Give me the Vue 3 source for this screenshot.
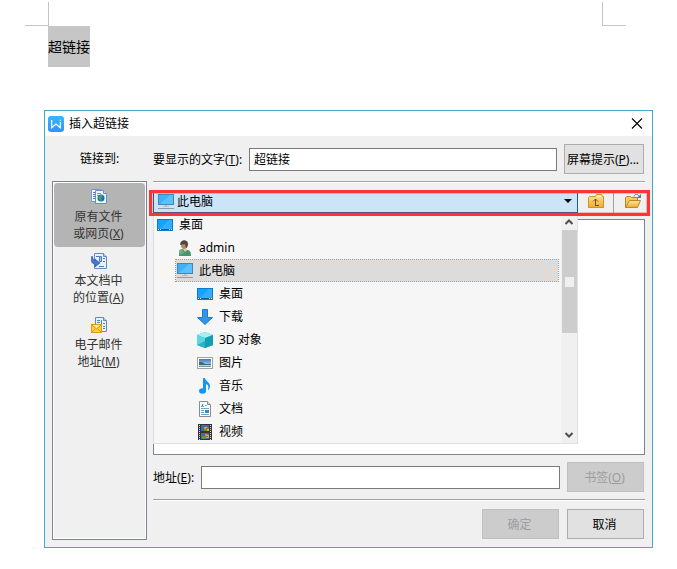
<template>
  <main class="page">
    <!-- shared icon shapes -->
    <svg class="sprite" width="0" height="0" aria-hidden="true">
      <defs>
        <linearGradient id="logo-blue" x1="0" y1="0" x2="0" y2="1">
          <stop offset="0" stop-color="#35b8fb" />
          <stop offset="1" stop-color="#3292f8" />
        </linearGradient>
        <linearGradient id="folder-gold" x1="0" y1="0" x2="0" y2="1">
          <stop offset="0" stop-color="#ffe79a" />
          <stop offset="1" stop-color="#efaa2c" />
        </linearGradient>
        <linearGradient id="sky" x1="0" y1="0" x2="0" y2="1">
          <stop offset="0" stop-color="#3b78c4" />
          <stop offset="1" stop-color="#d8ecf6" />
        </linearGradient>
      </defs>
      <symbol id="computer" viewBox="0 0 16 16">
        <rect x="0.5" y="0.5" width="15" height="10" fill="#3eb1f7" stroke="#3f87b5" />
        <path d="M2 10L12 1h3v9z" fill="#5cc1fb" />
        <path d="M7 11h2v1h2v1H5v-1h2z" fill="#b5bcc4" />
        <path d="M0 14.500h16" stroke="#8c9cae" />
      </symbol>
      <symbol id="desktop" viewBox="0 0 16 16">
        <rect x="0.5" y="2.5" width="15" height="11" fill="#16a1fb" stroke="#087cc8" />
        <path d="M3 12L12 3h3v9z" fill="#35adfc" />
        <path d="M1 12.500h14" stroke="#0b5f9d" />
        <path d="M1 12.500h1M3 12.500h1M12 12.500h1M14 12.500h1" stroke="#d6efff" />
      </symbol>
      <symbol id="user" viewBox="0 0 16 16">
        <path d="M2 16c0-5 1-6 4-7l4 1c3 0 4 2 4 6z" fill="#46956f" />
        <path d="M2 10l3-1 2 4-4 2z" fill="#6aae8c" />
        <path d="M6 8h3l1 2-2 2-2-3z" fill="#eac9a4" />
        <ellipse cx="7" cy="5" rx="3" ry="4" fill="#b98a68" />
        <path d="M3 5c0-6 8-6 8-1 0 2-1 4-2 4L8 4z" fill="#504740" />
      </symbol>
      <symbol id="download" viewBox="0 0 16 16">
        <path d="M5.500 0.500h5v8h5L8 15.500 0.500 8.500h5z" fill="#3295e7" stroke="#2278c2" />
      </symbol>
      <symbol id="cube" viewBox="0 0 16 16">
        <path d="M0 3l8-3 8 3v10l-8 3-8-3z" fill="#27bccd" />
        <path d="M0 3l8-3 8 3-8 3z" fill="#a5eff2" />
        <path d="M0 3l8 3v10l-8-3z" fill="#5cd6df" />
        <path d="M8 6l8-3v10l-8 3z" fill="#159db2" />
        <path d="M0 13l8-4v7z" fill="#26b3c5" />
      </symbol>
      <symbol id="picture" viewBox="0 0 16 16">
        <rect x="0.500" y="2.500" width="15" height="11" fill="#fff" stroke="#a2a2a2" />
        <rect x="2" y="4" width="12" height="8" fill="url(#sky)" />
        <path d="M2 7l3 0 3 2h6v1H2z" fill="#3c6d62" />
        <path d="M2 11h12v1H2z" fill="#6b99b7" />
      </symbol>
      <symbol id="music" viewBox="0 0 16 16">
        <ellipse cx="5.500" cy="13" rx="3.500" ry="2.800" fill="#1296f0" />
        <path d="M6 0h2c0 3 5 4 5 8 0 2-1 4-2 4 1-4 0-5-2-6v7H6z" fill="#1296f0" />
      </symbol>
      <symbol id="document" viewBox="0 0 16 16">
        <path d="M2.500 0.500h8l3 3v12h-11z" fill="#fff" stroke="#8b8b8b" />
        <path d="M10.500 0.500v3h3" fill="#ddd" stroke="#8b8b8b" />
        <path d="M4 5.500h3M8 4.500h2M4 7.500h8M4 9.500h3M4 11.500h3M4 13.500h8" stroke="#6ea5c5" />
        <path d="M6 3l-1 2" stroke="#1475a8" />
        <path d="M8 9h4v3H8z" fill="#448ab0" />
      </symbol>
      <symbol id="video" viewBox="0 0 16 16">
        <path d="M1 0h14v16H1z" fill="#343434" />
        <path d="M2.500 1v15M13.500 1v15" stroke="#e2e2e2" stroke-dasharray="1 1" />
        <path d="M4 1h8v6H4zM4 9h8v6H4z" fill="#3d69b5" />
        <path d="M7 3h3l2 2v2H8zM8 10l4 1v3H9z" fill="#e8b51e" />
        <path d="M7 5h3v2H7zM5 12h4v3H5z" fill="#63934b" />
        <path d="M9 4h2v1H9zM9 12h2v1H9z" fill="#d93b27" />
      </symbol>
      <symbol id="web-file" viewBox="0 0 16 16">
        <path d="M0.500 0.500h9v12h-9z" fill="#f7fbff" stroke="#7799c8" />
        <path d="M2 3.500h2M2 5.500h2M2 7.500h2M2 9.500h2" stroke="#4f78b8" />
        <path d="M4.500 1.500h8l3 3v10h-11z" fill="#eef5ff" stroke="#6d8ec0" />
        <path d="M12.500 1.500v3h3" fill="#bad1ef" stroke="#6d8ec0" />
        <path d="M6 4.500h4M6 6.500h2" stroke="#749bc8" />
        <circle cx="10" cy="9" r="3.500" fill="#2469b7" />
        <path d="M7 8l3-2 2 1-2 2 1 3-2-1z" fill="#42ad45" />
      </symbol>
      <symbol id="place-file" viewBox="0 0 16 16">
        <path d="M3.500 0.500h9l3 3v12h-12z" fill="#e8f1ff" stroke="#6788bd" />
        <path d="M12.500 0.500v3h3" fill="#bad0ee" stroke="#6788bd" />
        <path d="M5 3.500h3M12 5.500h2M12 8.500h2M8 13.500h5" stroke="#4b79ba" />
        <path d="M8.500 3.500h2v5h-2z" fill="#a8c7eb" stroke="#4b79ba" />
        <path d="M1 3C-1 8 1 11 4 11v3l5-4-5-4v2C3 8 2 6 1 3z" fill="#4777d1" stroke="#2449a1" stroke-width="0.600" />
      </symbol>
      <symbol id="mail-file" viewBox="0 0 16 16">
        <path d="M4.500 0.500h8l3 3v11h-11z" fill="#e8f1ff" stroke="#6788bd" />
        <path d="M12.500 0.500v3h3" fill="#bad0ee" stroke="#6788bd" />
        <path d="M6 3.500h3M6 5.500h3M12 6.500h2M12 9.500h2M12 11.500h2" stroke="#5583be" />
        <path d="M10 3h1v4h-1z" fill="#5583be" />
        <rect x="0.500" y="7.500" width="10" height="8" fill="#ffd03c" stroke="#e09a1a" />
        <path d="M1 8l4.500 4L10 8" fill="#ffec9c" stroke="#cf8a16" />
        <path d="M1 15l3-3M10 15l-3-3" stroke="#e09a1a" />
      </symbol>
      <symbol id="folder-up" viewBox="0 0 16 16">
        <path d="M0.500 3.500l1-1h6l1-2h5l1 2h1v11h-15z" fill="url(#folder-gold)" stroke="#d0922a" />
        <path d="M9 2.500h5" stroke="#fff0b5" />
        <path d="M7.500 11.500V5M5 7.500L7.500 5 10 7.500M7 11.500h4" fill="none" stroke="#70501c" />
      </symbol>
      <symbol id="folder-open" viewBox="0 0 16 16">
        <path d="M0.500 13.500v-10l1-1h4l1 1h6v3" fill="#f6c85d" stroke="#b38630" />
        <path d="M0.500 13.500l4-7h11l-3 7z" fill="url(#folder-gold)" stroke="#b98a2c" />
        <path d="M9 2.500c1-3 4-3 5 0" fill="none" stroke="#55749b" />
        <path d="M16 0v4h-4z" fill="#55749b" />
      </symbol>
    </svg>

    <section class="document">
      <div class="margins">
        <span class="mark mark--left"></span>
        <span class="mark mark--right"></span>
      </div>
      <p class="selection">超链接</p>
    </section>

    <form class="dialog" @submit.prevent>
      <header class="titlebar">
        <svg class="icon" viewBox="0 0 16 16" aria-hidden="true">
          <rect width="16" height="16" rx="3" fill="url(#logo-blue)" />
          <path
            d="M3 4.500h0.700v7.200L8 8l4.300 3.700V6M12.300 3.800v1"
            fill="none"
            stroke="#fff"
            stroke-width="1.200"
          />
        </svg>
        <h1>插入超链接</h1>
        <button class="close" type="button" aria-label="关闭">
          <svg viewBox="0 0 12 12" aria-hidden="true">
            <path d="M1 0.500l10 10M11 0.500L1 10.500" stroke="#000" stroke-width="1.100" />
          </svg>
        </button>
      </header>

      <div class="body">
        <aside class="side">
          <h2>链接到:</h2>
          <div class="targets">
            <button
              v-for="t in targets"
              :key="t.key"
              type="button"
              class="target"
              :class="{ active: target === t.key }"
              @click="target = t.key"
            >
              <svg class="icon" aria-hidden="true"><use :href="`#${t.icon}`" /></svg>
              <span>{{ t.first }}<br />{{ t.second }}(<u>{{ t.key }}</u>)</span>
            </button>
          </div>
        </aside>

        <section class="content">
          <div class="field">
            <label class="caption caption--wide" for="display-text">要显示的文字(<u>T</u>):</label>
            <input id="display-text" v-model="displayText" type="text" />
            <button class="btn btn--wide" type="button">屏幕提示(<u>P</u>)...</button>
          </div>

          <hr />

          <div class="browser">
            <div class="location">
              <div class="combo">
                <select v-model="folder" aria-label="查找范围">
                  <option v-for="f in folders" :key="f.id" :value="f.id">{{ f.label }}</option>
                </select>
                <svg class="icon combo-icon" aria-hidden="true"><use :href="`#${currentIcon}`" /></svg>
                <svg class="combo-arrow" viewBox="0 0 8 4" aria-hidden="true">
                  <path d="M0 0h8L4 4z" />
                </svg>

                <div class="dropdown">
                  <ul role="listbox" aria-label="查找范围">
                    <li
                      v-for="f in folders"
                      :key="f.id"
                      role="option"
                      :aria-selected="folder === f.id"
                      class="option"
                      :class="[`level-${f.level}`, { selected: folder === f.id }]"
                      @click="folder = f.id"
                    >
                      <svg class="icon" aria-hidden="true"><use :href="`#${f.icon}`" /></svg>
                      {{ f.label }}
                    </li>
                  </ul>
                  <div class="scrollbar">
                    <svg viewBox="0 0 8 6" aria-hidden="true">
                      <path d="M0.500 5L4 1.500 7.500 5" />
                    </svg>
                    <span class="thumb"><i></i></span>
                    <svg viewBox="0 0 8 6" aria-hidden="true">
                      <path d="M0.500 1L4 4.500 7.500 1" />
                    </svg>
                  </div>
                </div>
              </div>
              <button class="tool" type="button" aria-label="上一级">
                <svg class="icon" aria-hidden="true"><use href="#folder-up" /></svg>
              </button>
              <button class="tool" type="button" aria-label="浏览文件">
                <svg class="icon" aria-hidden="true"><use href="#folder-open" /></svg>
              </button>
              <span class="highlight"></span>
            </div>
            <div class="files"></div>
          </div>

          <div class="field">
            <label class="caption" for="address">地址(<u>E</u>):</label>
            <input id="address" v-model="address" type="text" />
            <button class="btn" type="button" disabled>书签(<u>O</u>)</button>
          </div>

          <hr />

          <footer class="actions">
            <button class="btn" type="submit" :disabled="!address">确定</button>
            <button class="btn" type="button">取消</button>
          </footer>
        </section>
      </div>
    </form>
  </main>
</template>

<script setup>
import { ref, computed } from "vue";

const targets = [
  { key: "X", icon: "web-file", first: "原有文件", second: "或网页" },
  { key: "A", icon: "place-file", first: "本文档中", second: "的位置" },
  { key: "M", icon: "mail-file", first: "电子邮件", second: "地址" },
];

const folders = [
  { id: "root", label: "桌面", icon: "desktop", level: 0 },
  { id: "admin", label: "admin", icon: "user", level: 1 },
  { id: "pc", label: "此电脑", icon: "computer", level: 1 },
  { id: "desktop", label: "桌面", icon: "desktop", level: 2 },
  { id: "downloads", label: "下载", icon: "download", level: 2 },
  { id: "objects", label: "3D 对象", icon: "cube", level: 2 },
  { id: "pictures", label: "图片", icon: "picture", level: 2 },
  { id: "music", label: "音乐", icon: "music", level: 2 },
  { id: "documents", label: "文档", icon: "document", level: 2 },
  { id: "videos", label: "视频", icon: "video", level: 2 },
];

const target = ref("X");
const folder = ref("pc");
const displayText = ref("超链接");
const address = ref("");

const currentIcon = computed(
  () => folders.find((f) => f.id === folder.value).icon,
);
</script>

<style>
body {
  background: #fff;
}
</style>

<style scoped>
.page {
  font-family: "Noto Sans", "Noto Sans CJK SC", sans-serif;
  font-size: 12px;
  line-height: 17px;
  color: #000;
  padding-bottom: 21px;
}

.page * {
  box-sizing: border-box;
}

.sprite {
  position: absolute;
}

.icon {
  display: block;
  flex: none;
  width: 16px;
  height: 16px;
}

button,
input,
select {
  font: inherit;
  color: inherit;
  margin: 0;
}

u {
  text-underline-offset: 1px;
}

/* document behind the dialog */
.margins {
  display: flex;
  justify-content: space-between;
  padding: 2px 51px 0 25px;
}

.mark {
  width: 24px;
  height: 24px;
  border: 0 solid #c4c4c4;
  border-bottom-width: 1px;
}

.mark--left {
  border-right-width: 1px;
}

.mark--right {
  border-left-width: 1px;
}

.selection {
  width: fit-content;
  margin: 0 0 0 48px;
  background: #c6c6c6;
  font-size: 14px;
  line-height: 41px;
}

/* dialog */
.dialog {
  margin: 43px 24px 0 44px;
  border: 1px solid #46a9c4;
  background: #f0f0f0;
}

.titlebar {
  display: flex;
  align-items: center;
  gap: 5px;
  height: 25px;
  padding: 0 9px 0 3px;
  background: #fff;
}

h1,
h2 {
  margin: 0;
  font-size: 12px;
  font-weight: 400;
}

.close {
  margin-left: auto;
  padding: 0;
  border: 0;
  background: none;
}

.close svg {
  display: block;
  width: 12px;
  height: 12px;
}

.body {
  display: grid;
  grid-template-columns: 95px minmax(0, 1fr);
  gap: 6px;
  padding: 8px 7px 7px;
}

.side {
  display: flex;
  flex-direction: column;
}

.side h2 {
  height: 37px;
  line-height: 30px;
  text-align: center;
}

.targets {
  flex: 1;
  padding: 1px;
  border: 1px solid #7f8490;
  box-shadow: inset 0 0 0 1px #fff;
}

.target {
  display: flex;
  flex-direction: column;
  align-items: center;
  gap: 3px;
  width: 100%;
  height: 64px;
  padding: 6px 2px 5px 0;
  border: 0;
  border-radius: 4px;
  background: none;
  color: #333;
}

.target.active {
  background: #b4b4b4;
}

.content {
  display: flex;
  flex-direction: column;
  gap: 7px;
}

hr {
  width: 100%;
  height: 2px;
  margin: 0;
  border: 0;
  border-top: 1px solid #a0a0a0;
  background: #fff;
}

.field {
  display: flex;
  align-items: center;
  gap: 7px;
  padding-right: 1px;
}

.caption {
  flex: none;
  width: 41px;
  white-space: nowrap;
}

.caption--wide {
  width: 89px;
}

.field input {
  flex: 1;
  min-width: 0;
  height: 23px;
  padding: 0 4px;
  border: 1px solid #7a7a7a;
  background: #fff;
  outline: none;
}

.btn {
  flex: none;
  width: 77px;
  height: 30px;
  padding: 0 2px 0 0;
  border: 1px solid #adadad;
  background: #e1e1e1;
  white-space: nowrap;
}

.btn--wide {
  width: 80px;
}

.btn:disabled {
  border-color: #bfbfbf;
  background: #ccc;
  color: #9c9ca0;
}

.browser {
  display: flex;
  flex-direction: column;
  gap: 6px;
}

.location {
  position: relative;
  display: flex;
  height: 23px;
}

.combo {
  position: relative;
  flex: 1;
}

.combo select {
  display: block;
  width: 100%;
  height: 23px;
  padding: 0 24px 0 23px;
  border: 1px solid #1b5c94;
  border-radius: 0;
  background: #cce4f7;
  appearance: none;
  outline: none;
}

.combo-icon {
  position: absolute;
  top: 4px;
  left: 5px;
  pointer-events: none;
}

.combo-arrow {
  position: absolute;
  top: 9px;
  right: 6px;
  width: 8px;
  height: 4px;
  pointer-events: none;
}

.dropdown {
  position: absolute;
  top: 100%;
  left: 0;
  right: 0;
  z-index: 1;
  display: flex;
  border: 1px solid #e0e0e0;
  border-top: 0;
  background: #f6f6f6;
}

.dropdown ul {
  flex: 1;
  margin: 0;
  padding: 0 2px 0 0;
  list-style: none;
}

.option {
  display: flex;
  align-items: center;
  gap: 6px;
  height: 23px;
  padding-left: 1px;
  border: 1px solid transparent;
}

.level-0 {
  margin-left: 1px;
}

.level-1 {
  margin-left: 21px;
}

.level-2 {
  margin-left: 41px;
}

.option.selected {
  border: 1px dotted #ff7f1a;
  background: #dcdcdc;
  background-clip: padding-box;
}

.scrollbar {
  display: flex;
  flex-direction: column;
  align-items: center;
  width: 16px;
  padding: 6px 0 5px;
  background: #f0f0f0;
}

.scrollbar svg {
  width: 8px;
  height: 6px;
  fill: none;
  stroke: #505050;
  stroke-width: 2;
}

.scrollbar svg:last-child {
  margin-top: auto;
}

.thumb {
  display: grid;
  place-items: center;
  width: 15px;
  height: 103px;
  margin-top: 5px;
  background: #cdcdcd;
}

.thumb i {
  width: 9px;
  height: 10px;
  background: #f0f0f0;
}

.tool {
  display: grid;
  place-items: center;
  width: 36px;
  padding: 0;
  border: 0;
  border-right: 1px solid #a0a0a0;
  background: none;
}

.tool + .tool {
  width: 31px;
  padding-left: 7px;
  border-right: 0;
}

.highlight {
  position: absolute;
  inset: 0 -5px -3px -4px;
  z-index: 2;
  border: 3px solid #fb3535;
  box-shadow: inset 0 0 0 1px rgba(251, 53, 53, 0.3);
  pointer-events: none;
}

.files {
  height: 236px;
  border: 1px solid #7f8490;
  background: #fff;
}

.actions {
  display: flex;
  justify-content: flex-end;
  gap: 8px;
  padding: 1px 1px 1px 0;
}
</style>
